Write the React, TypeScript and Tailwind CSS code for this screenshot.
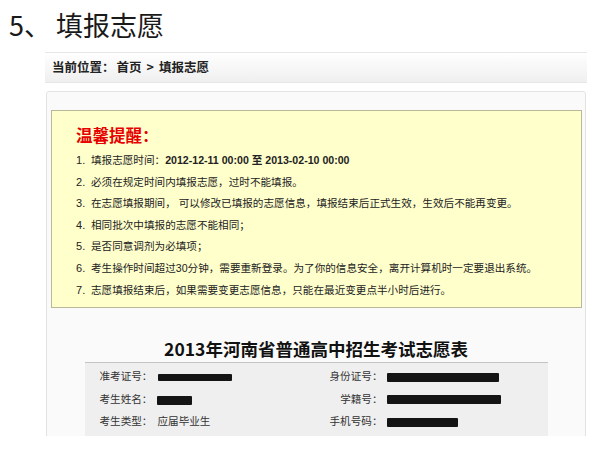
import React from 'react';

const FONT = '"Liberation Sans", "Noto Sans CJK SC", sans-serif';
const CJK = '"Noto Sans CJK SC", sans-serif';

const notices: React.ReactNode[] = [
  <>
    填报志愿时间：
    <span className="font-bold">2012-12-11 00:00 至 2013-02-10 00:00</span>
  </>,
  '必须在规定时间内填报志愿，过时不能填报。',
  '在志愿填报期间， 可以修改已填报的志愿信息，填报结束后正式生效，生效后不能再变更。',
  '相同批次中填报的志愿不能相同；',
  '是否同意调剂为必填项；',
  '考生操作时间超过30分钟，需要重新登录。为了你的信息安全，离开计算机时一定要退出系统。',
  '志愿填报结束后，如果需要变更志愿信息，只能在最近变更点半小时后进行。',
];

function Redacted({ w, h = 9 }: { w: number; h?: number }) {
  return <span className="inline-block bg-[#141414] rounded-[1px] align-middle" style={{ width: w, height: h }} />;
}

function Row({ left, leftVal, right, rightVal }: { left: string; leftVal: React.ReactNode; right: string; rightVal: React.ReactNode }) {
  return (
    <div className="flex items-center h-[22.5px] text-[10.6px] text-[#333]">
      <div className="w-[230px] pl-[15px] flex items-center">
        <span className="w-[58px]">{left}</span>
        {leftVal}
      </div>
      <div className="w-[68px] text-right">{right}</div>
      <div className="pl-[4px] flex items-center">{rightVal}</div>
    </div>
  );
}

export default function App() {
  return (
    <div className="w-[600px] h-[465px] bg-white overflow-hidden" style={{ fontFamily: FONT }}>
      <div className="pl-[9px] pt-[10px] text-[27px] leading-[30px] text-[#1a1a1a]" style={{ fontFamily: CJK }}>
        <span className="mr-[5px]">5、</span>填报志愿
      </div>

      <div className="ml-[45px] w-[542px] mt-[12px]">
        <div className="h-[31px] border-t border-b border-[#e6e6e6] bg-gradient-to-b from-white to-[#efefef] flex items-center pl-[7px] text-[12.5px] font-bold text-[#222]" style={{ fontFamily: CJK }}>
          当前位置：<span className="ml-[2px]">首页</span>
          <span className="mx-[5px]">&gt;</span>填报志愿
        </div>

        <div className="mt-[8px] h-[345px] overflow-hidden">
          <div className="ml-[1px] w-[540px] h-[400px] border border-[#e3e3e3] rounded-t-[3px] bg-[#fafafa] pt-[18px]">
            <div className="ml-[4px] w-[531px] border border-[#b9b898] bg-[#ffffcc] pl-[24px] pt-[12px] pb-[6px]">
              <div className="text-[16.5px] leading-[24px] font-bold text-[#e60000]" style={{ fontFamily: CJK }}>
                温馨提醒：
              </div>
              <ol className="mt-[3px] text-[10.6px] leading-[21.6px] text-[#222]">
                {notices.map((n, i) => (
                  <li key={i} className="flex">
                    <span className="w-[15px] shrink-0 text-[11px]">{i + 1}.</span>
                    <span>{n}</span>
                  </li>
                ))}
              </ol>
            </div>

            <div className="mt-[29px] text-center text-[17.5px] leading-[24px] font-bold text-[#111]" style={{ fontFamily: CJK }}>
              2013年河南省普通高中招生考试志愿表
            </div>

            <div className="mt-[1px] mx-auto w-[463px] h-[120px] border-t border-[#c4c4c4] bg-[#efefef] pt-[3px]">
              <Row left="准考证号：" leftVal={<Redacted w={74} h={7} />} right="身份证号：" rightVal={<Redacted w={112} />} />
              <Row left="考生姓名：" leftVal={<span className="-ml-[1px]"><Redacted w={35} /></span>} right="学籍号：" rightVal={<Redacted w={114} />} />
              <Row left="考生类型：" leftVal={<span>应届毕业生</span>} right="手机号码：" rightVal={<Redacted w={71} />} />
            </div>
          </div>
        </div>
      </div>
    </div>
  );
}
